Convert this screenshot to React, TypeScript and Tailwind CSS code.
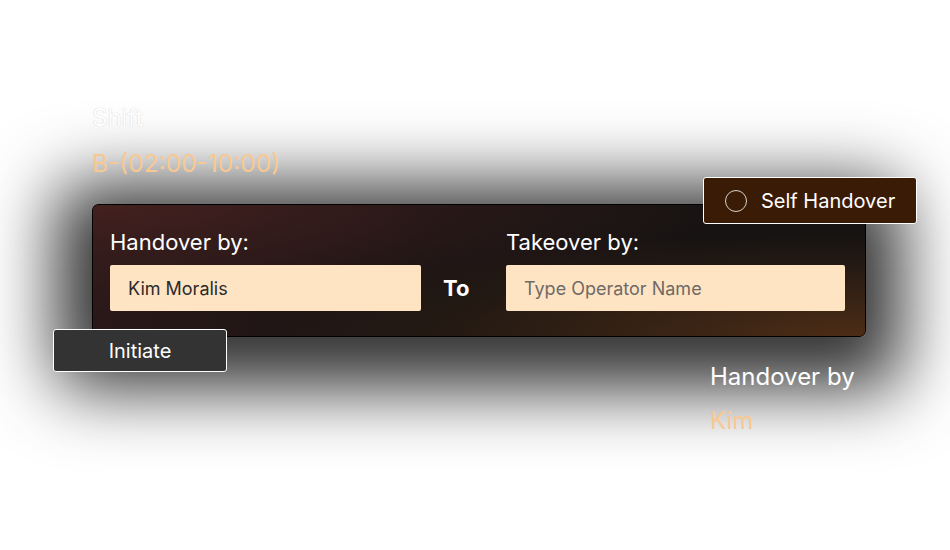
import React from "react";

export default function App() {
  return (
    <div
      className="w-[950px] h-[550px] bg-white overflow-hidden"
      style={{ fontFamily: "Inter, 'Liberation Sans', sans-serif" }}
    >
      <div className="pl-[92px] pt-[104px]">
        <div className="relative z-10 text-[24px] leading-[28px] text-white [text-shadow:0_0_1px_rgba(0,0,0,0.25)]">Shift</div>
        <div className="relative z-10 mt-[16px] text-[24.5px] leading-[30px] text-[#f8c890]">B-(02:00-10:00)</div>
        <div className="relative mt-[26px] w-[774px] h-[133px] rounded-[6px] border border-black shadow-[0_16px_70px_36px_rgba(0,0,0,0.8)] bg-[radial-gradient(ellipse_at_0%_0%,#42201f_0%,rgba(60,30,30,0.5)_30%,transparent_60%),radial-gradient(ellipse_at_100%_100%,#4d2d16_0%,rgba(77,45,22,0.4)_30%,transparent_55%),linear-gradient(90deg,#2a1818,#161312_45%,#161312)]">
          <div className="flex items-end pl-[17px] pr-[20px] pt-[24px]">
            <div className="flex flex-col w-[311px]">
              <div className="text-[22px] leading-[26px] text-white">Handover by:</div>
              <div className="mt-[10px] h-[46px] flex items-center pl-[18px] bg-[#ffe4c4] rounded-[2px] text-[18px] text-[#2b2b2b]">
                Kim Moralis
              </div>
            </div>
            <div className="w-[85px] h-[46px] flex items-center pl-[22px] text-[22px] font-bold text-white">To</div>
            <div className="flex flex-col flex-1">
              <div className="text-[22px] leading-[26px] text-white">Takeover by:</div>
              <div className="mt-[10px] h-[46px] flex items-center pl-[18px] bg-[#ffe4c4] rounded-[2px] text-[18px] text-[#6e6a66]">
                Type Operator Name
              </div>
            </div>
          </div>
          <button className="absolute left-[610px] top-[-28px] w-[214px] h-[47px] flex items-center gap-[14px] pl-[21px] bg-[#3a1c06] border border-white rounded-[3px] text-[20px] text-white">
            <span className="w-[22px] h-[22px] rounded-full border-[1.5px] border-[#d8d0c8]" />
            Self Handover
          </button>
          <button className="absolute left-[-40px] top-[124px] w-[174px] h-[43px] flex items-center justify-center bg-[#333333] border border-white rounded-[3px] text-[20px] text-white">
            Initiate
          </button>
        </div>
        <div className="relative z-10 ml-[618px] mt-[26px] text-[24px] leading-[28px] text-white">Handover by</div>
        <div className="relative z-10 ml-[618px] mt-[16px] text-[24px] leading-[28px] text-[#f8c890]">Kim</div>
      </div>
    </div>
  );
}
